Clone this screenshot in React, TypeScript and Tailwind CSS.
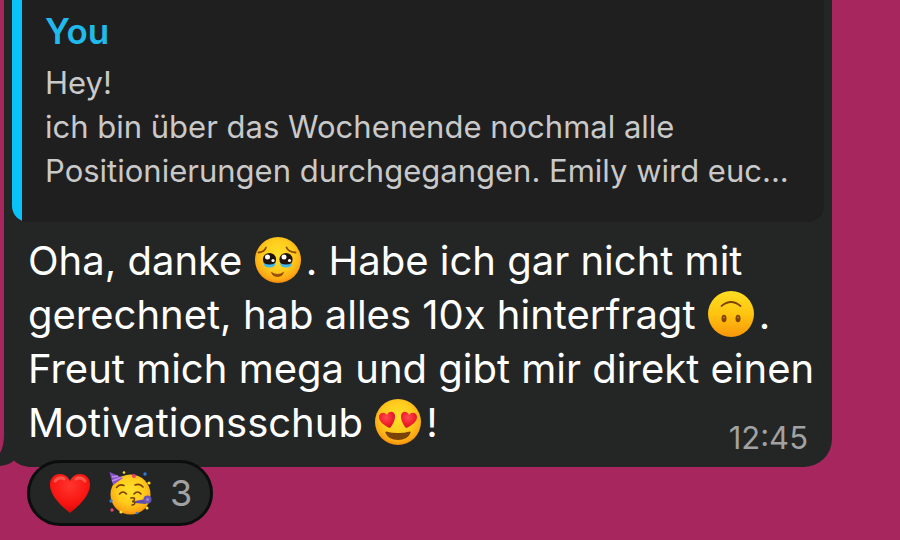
import type { ReactNode } from 'react';

const quoteLines = [
  'Hey!',
  'ich bin über das Wochenende nochmal alle',
  'Positionierungen durchgegangen. Emily wird euc...',
];

function Emoji({ label, children }: { label: string; children: ReactNode }) {
  return (
    <svg viewBox="0 0 48 48" role="img" aria-label={label} className="mr-1 inline-block size-12 align-[-9px]">
      {children}
    </svg>
  );
}

function Defs() {
  return (
    <svg className="absolute size-0" aria-hidden="true">
      <defs>
        <radialGradient id="face" cx="0.5" cy="0.4" r="0.62">
          <stop offset="0" stopColor="#ffe02a" />
          <stop offset="0.55" stopColor="#ffcb1c" />
          <stop offset="0.85" stopColor="#fca814" />
          <stop offset="1" stopColor="#ee830c" />
        </radialGradient>
        <linearGradient id="flip" x1="0" y1="0" x2="0" y2="1">
          <stop offset="0" stopColor="#ffdf22" />
          <stop offset="0.5" stopColor="#ffc40f" />
          <stop offset="1" stopColor="#f8960a" />
        </linearGradient>
        <radialGradient id="heart" cx="0.5" cy="0.3" r="0.75">
          <stop offset="0" stopColor="#ff352d" />
          <stop offset="0.65" stopColor="#f8130f" />
          <stop offset="1" stopColor="#c90808" />
        </radialGradient>
        <radialGradient id="eyeHeart" cx="0.45" cy="0.35" r="0.7">
          <stop offset="0" stopColor="#ff4a4f" />
          <stop offset="0.6" stopColor="#f01f2c" />
          <stop offset="1" stopColor="#c81420" />
        </radialGradient>
      </defs>
    </svg>
  );
}

function TearyFace() {
  return (
    <Emoji label="Face holding back tears">
      <circle cx="24" cy="24" r="23" fill="url(#face)" />
      <g fill="none" stroke="#8c4a08" strokeWidth="1.8" strokeLinecap="round">
        <path d="M4.500 16.500q6-.5 7.500-5" />
        <path d="M41.500 16.500q-7-.5-9-5" />
      </g>
      <circle cx="15.500" cy="23.500" r="6.600" fill="#20120c" />
      <circle cx="32" cy="23.500" r="6.600" fill="#20120c" />
      <path d="M9.500 27q6 3 12 0q-.5 4.500-6 4.500t-6-4.500z" fill="#3fb9ee" />
      <path d="M26 27q6 3 12 0q-.5 4.500-6 4.500t-6-4.500z" fill="#3fb9ee" />
      <g fill="#fff">
        <circle cx="13.500" cy="21" r="2.500" />
        <circle cx="30" cy="21" r="2.500" />
        <circle cx="19" cy="24.500" r="1.600" />
        <circle cx="35.500" cy="24.500" r="1.600" />
      </g>
      <path d="M17.500 36.500q6 4 12 0q-1 4-6 4t-6-4z" fill="#96500a" stroke="#96500a" strokeLinejoin="round" />
    </Emoji>
  );
}

function UpsideDownFace() {
  return (
    <Emoji label="Upside-down face">
      <circle cx="24" cy="24" r="23" fill="url(#flip)" />
      <path d="M14.500 16q9.500-8 19 0" fill="none" stroke="#7d4307" strokeWidth="1.800" strokeLinecap="round" />
      <ellipse cx="17" cy="28.500" rx="2.500" ry="3.800" fill="#7d4307" />
      <ellipse cx="31" cy="28.500" rx="2.500" ry="3.800" fill="#7d4307" />
      <circle cx="17" cy="27.500" r="1" fill="#b97a2c" />
      <circle cx="31" cy="27.500" r="1" fill="#b97a2c" />
    </Emoji>
  );
}

function HeartEyesFace() {
  return (
    <Emoji label="Smiling face with heart eyes">
      <circle cx="24" cy="24" r="23" fill="url(#face)" />
      <g fill="url(#eyeHeart)">
        <path d="M16 30C10.500 28 5 23.500 5 19C5 14.500 10.500 13 13 17C14.500 12.500 20.500 12.500 21 17.500C21.300 22 18.500 27 16 30z" />
        <path d="M32 30C37.500 28 43 23.500 43 19C43 14.500 37.500 13 35 17C33.500 12.500 27.500 12.500 27 17.500C26.700 22 29.500 27 32 30z" />
      </g>
      <path d="M12 33.500q12 3 24 0q1 0 .5 1.500q-3 7-12.500 7t-12.500-7q-.5-1.500.5-1.500z" fill="#7a4406" />
    </Emoji>
  );
}

function RedHeart() {
  return (
    <svg viewBox="0 0 40 40" role="img" aria-label="Red heart" className="size-10">
      <path d="M20 40C11 33 0 22 0 12C0 5 4 1 10 1C15 1 18 4 20 8C22 4 25 1 30 1C36 1 40 5 40 12C40 22 29 33 20 40z" fill="url(#heart)" />
      <path d="M5 8q4-5 9-2M26 6q5-3 9 2" fill="none" stroke="#ff8e82" strokeWidth="3" strokeLinecap="round" opacity="0.500" />
    </svg>
  );
}

function PartyFace() {
  return (
    <svg viewBox="0 0 44 44" role="img" aria-label="Partying face" className="size-11">
      <circle cx="22.500" cy="23.500" r="20" fill="url(#face)" />
      <path d="M1.500 1L15 7L5 14z" fill="#8453c9" />
      <path d="M4 6l6-1M4 10l10-4" stroke="#c18be8" strokeWidth="1.500" />
      <g fill="none" stroke="#784006" strokeWidth="1.600" strokeLinecap="round">
        <path d="M8.500 16.500q3-4 7.500-2M27 14q5-2 8 2" />
        <path d="M11.500 23q3.500-4 7 0M26 23q3.500-4 7 0" />
        <path d="M23 27q5-1 3 2.500q-1 1-2 1q4 0 2.500 2.500q-1 1-2.500 1" />
      </g>
      <path d="M27 30l11-2v5l-11-1z" fill="#5c4bae" />
      <circle cx="39.500" cy="28.500" r="4" fill="#6755b7" />
      <circle cx="39.500" cy="28.500" r="1.500" fill="#9b83d3" />
      <g fill="#f03f71">
        <circle cx="26" cy="5" r="2" />
        <circle cx="4" cy="39" r="1.700" />
      </g>
      <g fill="#ffdb31">
        <circle cx="16" cy="1.500" r="1.300" />
        <circle cx="41" cy="12" r="1.600" />
        <circle cx="13" cy="41" r="1.600" />
        <circle cx="39" cy="37" r="1.500" />
      </g>
      <g fill="#347dd5">
        <circle cx="37" cy="3" r="1.700" />
        <circle cx="3" cy="30" r="1.700" />
        <circle cx="29" cy="42" r="1.300" />
      </g>
    </svg>
  );
}

function BubbleTail() {
  return (
    <svg viewBox="0 0 32 48" className="absolute bottom-0 -left-1 h-12 w-8" aria-hidden="true">
      <path d="M4 0V16Q4 27 0 34V47Q9 46 14 41.500Q20 48 32 48V0z" fill="#242626" />
    </svg>
  );
}

function QuotedMessage() {
  return (
    <blockquote className="overflow-hidden rounded-b-2xl bg-[#1f1f1f]">
      <div className="border-l-[10px] border-[#08c2f8] pr-6 pb-[29px] pl-[23px]">
        <p className="pt-[7px] text-[35px] leading-[48px] font-semibold text-[#1fb9ec]">You</p>
        <div className="pt-[6px] text-[31px] leading-[44px] whitespace-nowrap text-[#c9c9c9]">
          {quoteLines.map((line) => (
            <p key={line}>{line}</p>
          ))}
        </div>
      </div>
    </blockquote>
  );
}

export default function App() {
  return (
    <main className="min-h-screen overflow-hidden bg-[#a8265e] pr-[68px] pl-1 font-['Inter',sans-serif]">
      <Defs />
      <article className="relative rounded-b-[28px] bg-[#242626] px-2 pb-[17px]">
        <BubbleTail />
        <QuotedMessage />
        <div className="relative px-4 pt-3 text-[40px] leading-[54px] whitespace-nowrap text-white">
          <p>
            Oha, danke <TearyFace />. Habe ich gar nicht mit
            <br />
            gerechnet, hab alles 10x hinterfragt <UpsideDownFace />.
            <br />
            Freut mich mega und gibt mir direkt einen
          </p>
          <div className="flex items-end justify-between">
            <p>
              Motivationsschub <HeartEyesFace />!
            </p>
            <time className="text-[31px] leading-6 text-[#a2a2a2]">12:45</time>
          </div>
        </div>
      </article>
      <button
        type="button"
        aria-label="3 reactions"
        className="relative -mt-[7px] ml-[23px] flex h-[66px] items-center gap-[18px] rounded-full border-[3px] border-[#0c0e0e] bg-[#242626] pr-[18px] pl-5 text-[36px] text-[#a2a2a2]"
      >
        <RedHeart />
        <PartyFace />
        <span>3</span>
      </button>
    </main>
  );
}
